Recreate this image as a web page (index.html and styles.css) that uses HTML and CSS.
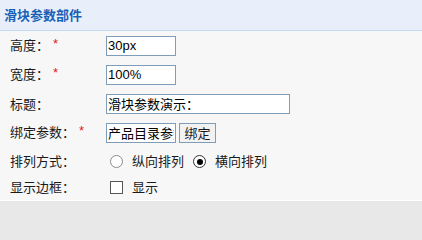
FILE: index.html
```html
<!DOCTYPE html>
<html lang="zh-CN">
<head>
<meta charset="utf-8">
<title>滑块参数部件</title>
<link rel="stylesheet" href="styles.css">
</head>
<body>
<div class="panel">
  <div class="panel-head">滑块参数部件</div>
  <div class="form">
    <div class="row row-input">
      <div class="label">高度：<span class="req">*</span></div>
      <div class="value"><input class="txt txt-short" type="text" value="30px"></div>
    </div>
    <div class="row row-input">
      <div class="label">宽度：<span class="req">*</span></div>
      <div class="value"><input class="txt txt-short" type="text" value="100%"></div>
    </div>
    <div class="row row-input">
      <div class="label">标题：</div>
      <div class="value"><input class="txt txt-long" type="text" value="滑块参数演示："></div>
    </div>
    <div class="row row-input">
      <div class="label">绑定参数：<span class="req">*</span></div>
      <div class="value">
        <input class="txt txt-short" type="text" value="产品目录参数">
        <button class="btn" type="button">绑定</button>
      </div>
    </div>
    <div class="row row-choice">
      <div class="label">排列方式：</div>
      <div class="value">
        <label class="opt"><input class="radio" type="radio" name="dir"><span>纵向排列</span></label>
        <label class="opt"><input class="radio" type="radio" name="dir" checked><span>横向排列</span></label>
      </div>
    </div>
    <div class="row row-choice row-last">
      <div class="label">显示边框：</div>
      <div class="value">
        <label class="opt"><input class="check" type="checkbox"><span>显示</span></label>
      </div>
    </div>
  </div>
</div>
</body>
</html>
```
FILE: styles.css
```css
html, body {
  margin: 0;
  padding: 0;
}
body {
  background: #e8e8e8;
  font-family: "Noto Sans CJK SC", "Liberation Sans", sans-serif;
  font-size: 13px;
  color: #1a1a1a;
}
.panel {
  width: 422px;
  height: 200px;
  background: #f7f7f7;
  border-bottom: 1px solid #ffffff;
}
.panel-head {
  height: 30px;
  line-height: 30px;
  padding-left: 4px;
  background: #e8effb;
  border-bottom: 1px solid #c3d9f1;
  color: #1a5fb6;
  font-weight: bold;
  font-size: 13px;
}
.form {
  display: flex;
  flex-direction: column;
}
.row {
  display: flex;
  align-items: center;
  height: 29px;
}
.row-choice {
  height: 27px;
}
.row-last {
  height: 26px;
}
.label {
  width: 96px;
  padding-left: 10px;
  line-height: 16px;
  white-space: nowrap;
}
.req {
  color: #e0201c;
  font-family: "Liberation Sans", sans-serif;
  margin-left: 4px;
  position: relative;
  top: -2px;
}
.value {
  display: flex;
  align-items: center;
  gap: 3px;
}
.txt {
  box-sizing: border-box;
  height: 20px;
  margin: 0;
  padding: 0 1px;
  border: 1px solid #7f9db9;
  background: #ffffff;
  font-family: "Liberation Sans", "Noto Sans CJK SC", sans-serif;
  font-size: 13px;
  color: #000;
  outline: none;
}
.txt-short {
  width: 70px;
}
.txt-long {
  width: 184px;
}
.btn {
  box-sizing: border-box;
  height: 20px;
  width: 37px;
  margin: 0;
  padding: 0;
  border: 1px solid #7f9db9;
  background: #f2f2f2;
  font-family: "Noto Sans CJK SC", sans-serif;
  font-size: 13px;
  line-height: 16px;
  color: #1a1a1a;
}
.opt {
  display: flex;
  align-items: center;
  line-height: 16px;
}
.opt + .opt {
  margin-left: 6px;
}
.opt:first-child {
  margin-left: 4px;
}
.radio, .check {
  -webkit-appearance: none;
  appearance: none;
  box-sizing: border-box;
  width: 13px;
  height: 13px;
  margin: 2px 9px 0 0;
  background: #ffffff;
  border: 1px solid #8a8a8a;
  position: relative;
}
.radio {
  border-radius: 50%;
}
.radio:checked {
  border-color: #333333;
}
.radio:checked::after {
  content: "";
  position: absolute;
  left: 2.5px;
  top: 2.5px;
  width: 6px;
  height: 6px;
  border-radius: 50%;
  background: #000000;
}
.check {
  border-color: #555555;
  margin-top: 1px;
}
```
